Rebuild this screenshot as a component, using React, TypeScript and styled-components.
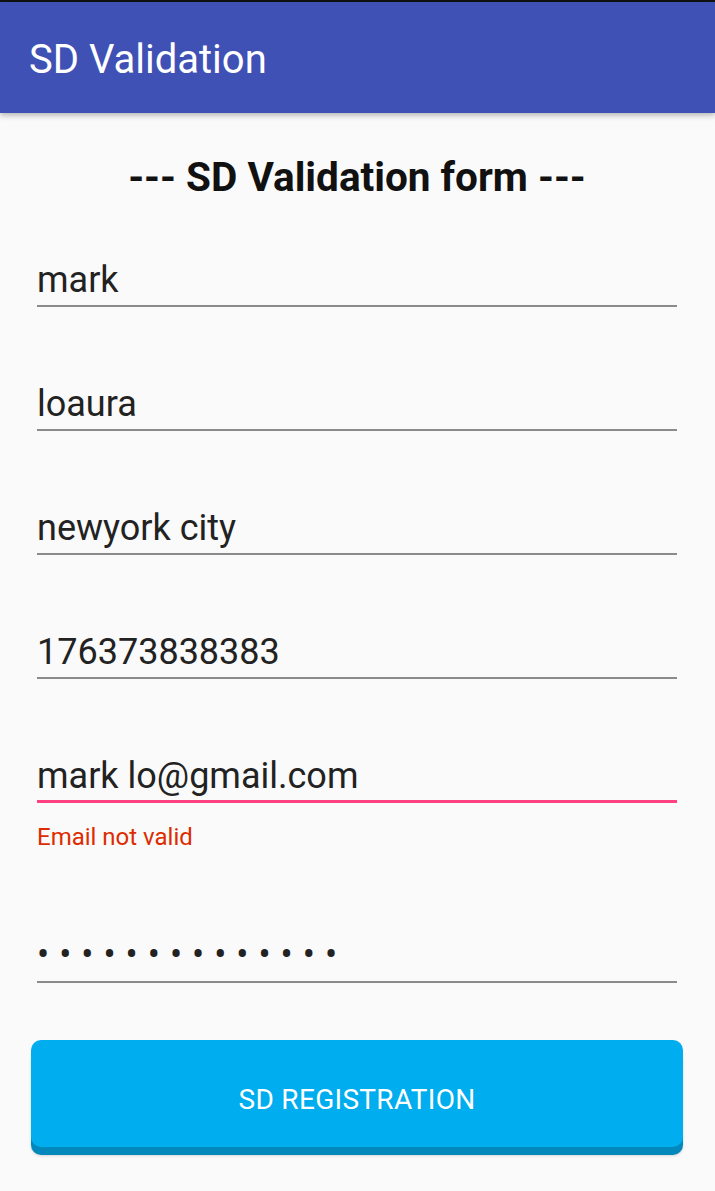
import React from 'react'
import styled, { createGlobalStyle } from 'styled-components'

const GlobalStyle = createGlobalStyle`
  html, body {
    margin: 0;
    padding: 0;
    background: #fafafa;
    font-family: Roboto, 'Noto Sans', sans-serif;
  }
`

const Screen = styled.div`
  width: 715px;
  min-height: 1191px;
  background: #fafafa;
  border-top: 2px solid #111;
  box-sizing: border-box;
`

const AppBar = styled.header`
  height: 111px;
  background: #3f51b5;
  display: flex;
  align-items: center;
  padding-left: 29px;
  box-shadow: 0 2px 6px rgba(0, 0, 0, 0.3);
  position: relative;
`

const AppTitle = styled.h1`
  margin: 0;
  color: #fff;
  font-size: 40px;
  font-weight: 400;
  line-height: 1;
  padding-top: 4px;
`

const Form = styled.div`
  padding: 44px 38px 0 37px;
  display: flex;
  flex-direction: column;
`

const Heading = styled.h2`
  margin: 0;
  text-align: center;
  font-size: 40.5px;
  font-weight: 700;
  color: #111;
  line-height: 40px;
`

const Field = styled.div<{ $focused?: boolean; $gap?: number }>`
  margin-top: ${p => p.$gap ?? 59}px;
  height: 56px;
  display: flex;
  align-items: flex-end;
  padding-bottom: ${p => (p.$focused ? 6 : 7)}px;
  box-sizing: content-box;
  border-bottom: ${p => (p.$focused ? '3px solid #ff4081' : '2px solid #8a8a8a')};
  font-size: 36px;
  line-height: 1;
  color: #222;
`

const Dots = styled.span`
  letter-spacing: 10px;
  font-size: 36px;
  padding-bottom: 1px;
`

const ErrorText = styled.div`
  margin-top: 22px;
  font-size: 24px;
  color: #dd2c00;
  line-height: 1;
`

const Button = styled.button`
  margin: 57px -6px 0 -6px;
  height: 107px;
  padding-top: 12px;
  border: none;
  border-radius: 10px;
  background: #00adee;
  color: #fff;
  font-family: Roboto, sans-serif;
  font-size: 28px;
  letter-spacing: 0.3px;
  box-shadow: 0 8px 0 #0388bb, 0 9px 3px rgba(0, 0, 0, 0.15);
`

const App: React.FC = () => {
  return (
    <Screen>
      <GlobalStyle />
      <AppBar>
        <AppTitle>SD Validation</AppTitle>
      </AppBar>
      <Form>
        <Heading>--- SD Validation form ---</Heading>
        <Field $gap={45}>mark</Field>
        <Field>loaura</Field>
        <Field>newyork city</Field>
        <Field>176373838383</Field>
        <Field $focused>mark lo@gmail.com</Field>
        <ErrorText>Email not valid</ErrorText>
        <Field $gap={69}>
          <Dots>••••••••••••••</Dots>
        </Field>
        <Button>SD REGISTRATION</Button>
      </Form>
    </Screen>
  )
}

export default App
